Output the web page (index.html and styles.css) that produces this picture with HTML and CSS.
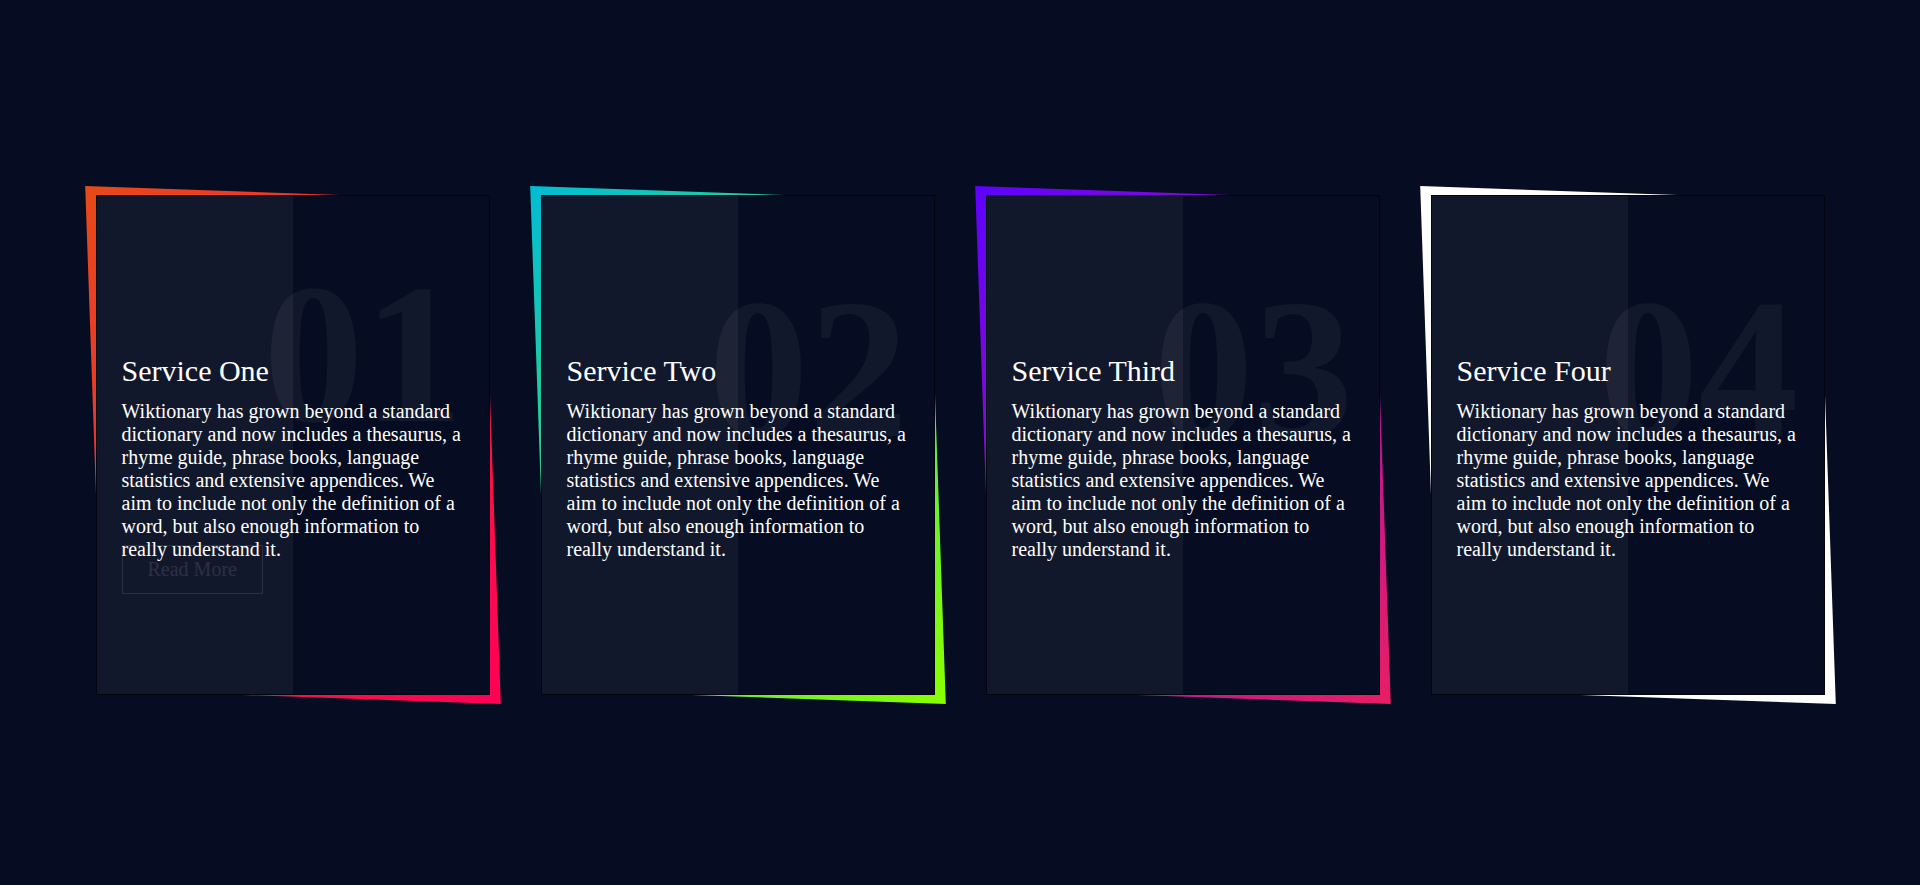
FILE: index.html
```html
<!DOCTYPE html>
<html lang="en">
<head>
<meta charset="utf-8">
<title>Services</title>
<link rel="stylesheet" href="styles.css">
</head>
<body>
<div class="container">
  <div class="box box-1 is-active">
    <div class="content">
      <h2 class="num">01</h2>
      <h3 class="title">Service One</h3>
      <p class="text">Wiktionary has grown beyond a standard dictionary and now includes a thesaurus, a rhyme guide, phrase books, language statistics and extensive appendices. We aim to include not only the definition of a word, but also enough information to really understand it.</p>
      <a class="more" href="#">Read More</a>
    </div>
  </div>
  <div class="box box-2">
    <div class="content">
      <h2 class="num">02</h2>
      <h3 class="title">Service Two</h3>
      <p class="text">Wiktionary has grown beyond a standard dictionary and now includes a thesaurus, a rhyme guide, phrase books, language statistics and extensive appendices. We aim to include not only the definition of a word, but also enough information to really understand it.</p>
      <a class="more" href="#">Read More</a>
    </div>
  </div>
  <div class="box box-3">
    <div class="content">
      <h2 class="num">03</h2>
      <h3 class="title">Service Third</h3>
      <p class="text">Wiktionary has grown beyond a standard dictionary and now includes a thesaurus, a rhyme guide, phrase books, language statistics and extensive appendices. We aim to include not only the definition of a word, but also enough information to really understand it.</p>
      <a class="more" href="#">Read More</a>
    </div>
  </div>
  <div class="box box-4">
    <div class="content">
      <h2 class="num">04</h2>
      <h3 class="title">Service Four</h3>
      <p class="text">Wiktionary has grown beyond a standard dictionary and now includes a thesaurus, a rhyme guide, phrase books, language statistics and extensive appendices. We aim to include not only the definition of a word, but also enough information to really understand it.</p>
      <a class="more" href="#">Read More</a>
    </div>
  </div>
</div>
</body>
</html>
```
FILE: styles.css
```css
html, body {
  margin: 0;
  padding: 0;
}
body {
  box-sizing: border-box;
  min-height: 100vh;
  padding-top: 4px;
  background: #060c21;
  display: flex;
  justify-content: center;
  align-items: center;
  font-family: "Liberation Serif", "Times New Roman", serif;
  overflow: hidden;
}
.container {
  display: flex;
  gap: 51px;
}
.box {
  position: relative;
  box-sizing: border-box;
  width: 394px;
  height: 500px;
  background: #060c21;
  border: 1px solid #02050f;
  display: flex;
  justify-content: center;
  align-items: center;
}
.box::before {
  content: "";
  position: absolute;
  top: -3px;
  left: -3px;
  right: -3px;
  bottom: -3px;
  background: #fff;
  transform: skew(2deg, 2deg);
  z-index: -1;
}
.box-1::before { background: linear-gradient(315deg, #ff0057, #e64a19); }
.box-2::before { background: linear-gradient(315deg, #89ff00, #00bcd4); }
.box-3::before { background: linear-gradient(315deg, #e91e63, #5d02ff); }
.box::after {
  content: "";
  position: absolute;
  top: 0;
  left: 0;
  width: 50%;
  height: 100%;
  background: rgba(255, 255, 255, 0.05);
  pointer-events: none;
}
.content {
  position: relative;
  padding: 25px;
  transform: translateY(50px);
}
.num {
  position: absolute;
  top: -75px;
  right: 25px;
  margin: 0;
  padding: 0;
  font-size: 200px;
  line-height: normal;
  color: rgba(255, 255, 255, 0.05);
}
.is-active .num {
  top: -90px;
}
.title {
  margin: 0 0 12px;
  padding: 0;
  font-size: 30px;
  font-weight: 400;
  color: #fff;
}
.text {
  margin: 0;
  padding: 0;
  font-size: 20px;
  color: #fff;
}
.more {
  position: relative;
  display: inline-block;
  margin: 25px 0 0;
  padding: 12px 25px;
  font-size: 20px;
  text-decoration: none;
  color: #fff;
  border: 1px solid #fff;
  transform: translateY(-50px);
  opacity: 0;
  visibility: hidden;
}
.is-active .more {
  visibility: visible;
  opacity: 0.1;
  transform: translateY(-41px);
}
```
